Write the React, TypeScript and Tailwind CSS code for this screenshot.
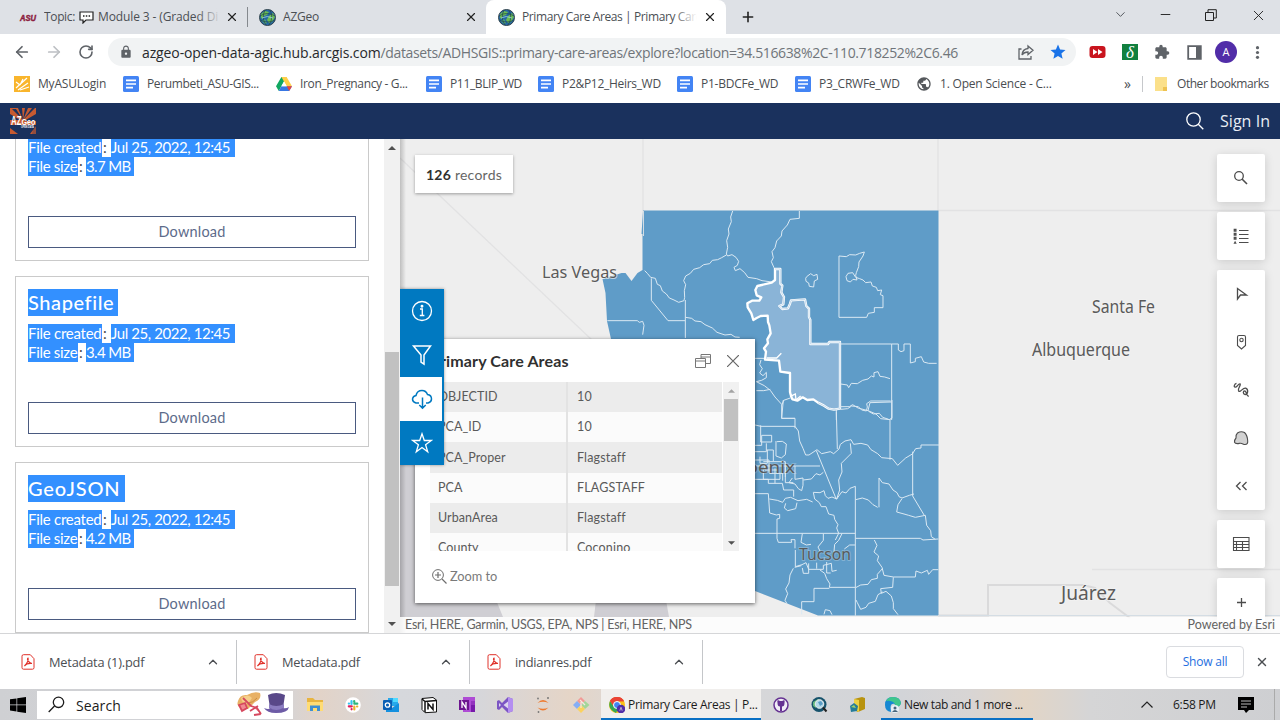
import React from "react";
import { ArrowLeft, ArrowRight, RotateCw, X, Plus, ChevronDown, ChevronUp, Minus } from "lucide-react";
import { MdLock, MdExtension, MdStar, MdPublic } from "react-icons/md";

const UI = "font-['Open_Sans','Noto_Sans',sans-serif]";
const AV = "font-['Lato','Open_Sans',sans-serif]";

function Globe() {
  return (
    <svg className="size-[17px] shrink-0" viewBox="0 0 17 17">
      <circle cx="8.500" cy="8.500" r="8" fill="#2468a3" stroke="#33444c" />
      <path d="M2 5l4-3 4 1-2 3-3 1-1 3-2-1zM10 7l4-3 2 4-3 5-3 1-2-3z" fill="#6abb52" />
      <path d="M6 10l2 4-2 1-3-3z" fill="#55a975" />
      <path d="M1 7q7-5 15 0M1 11q8 4 15 0M6 1q-4 8 1 15M11 1q4 8-1 15" stroke="#1f4450" strokeWidth=".7" fill="none" />
      <path d="M3 9q5-3 11 0" stroke="#9bd0e8" strokeWidth=".8" fill="none" />
    </svg>
  );
}

function DocIcon() {
  return (
    <svg className="size-4 shrink-0" viewBox="0 0 16 16">
      <rect width="16" height="16" rx="1.500" fill="#4384f4" />
      <path d="M3 4.300h10M3 8h10M3 11.700h7" stroke="#fff" strokeWidth="1.700" />
    </svg>
  );
}

function TabStrip() {
  return (
    <div className="flex h-[34px] shrink-0 bg-[#dee1e6] text-[12px] text-[#4b4f54]">
      <div className="flex w-[248px] items-center pl-5">
        <svg className="mr-[8px] h-[8px] w-4 shrink-0 overflow-visible" viewBox="0 0 16 8">
          <text x="0" y="7.500" textLength="16" lengthAdjust="spacingAndGlyphs" fontFamily="Liberation Sans, sans-serif" fontSize="9.500" fontWeight="700" fontStyle="italic" fill="#8c1d40" stroke="#8c1d40" strokeWidth=".5">ASU</text>
        </svg>
        <span className="relative flex w-[177px] items-center overflow-hidden whitespace-nowrap">
          <span className="tracking-[-0.35px]">Topic:</span>
          <svg className="mx-[4px] h-[13px] w-[15px] shrink-0" viewBox="0 0 15 13">
            <path d="M1 1h13v8H7l-3 3V9H1z" fill="#fff" stroke="#222" strokeWidth="1.200" />
            <path d="M4 5h1.500M6.800 5h1.500M9.600 5h1.500" stroke="#222" strokeWidth="1.500" />
          </svg>
          <span className="tracking-[-0.12px]">Module 3 - (Graded Di</span>
          <span className="absolute right-0 h-5 w-6 bg-gradient-to-r from-transparent to-[#dee1e6]" />
        </span>
        <X className="ml-[4px] size-[14px] text-[#222]" strokeWidth={2} />
        <span className="ml-auto h-5 w-px bg-[#85898e]" />
      </div>
      <div className="flex w-[238px] items-center pl-[11px]">
        <Globe />
        <span className="ml-[7px] w-[181px] text-[12px] tracking-[-0.2px]">AZGeo</span>
        <X className="size-[14px] shrink-0 text-[#222]" strokeWidth={2} />
      </div>
      <div className="flex w-[240px] items-center rounded-t-[8px] bg-white pl-[12px]">
        <Globe />
        <span className="relative ml-[7px] w-[175px] overflow-hidden whitespace-nowrap tracking-[-0.4px]">
          Primary Care Areas | Primary Care
          <span className="absolute right-0 h-5 w-6 bg-gradient-to-r from-transparent to-white" />
        </span>
        <X className="ml-[6px] size-[14px] shrink-0 text-[#222]" strokeWidth={2} />
      </div>
      <Plus className="ml-[14px] mt-[9px] size-4 text-[#222]" strokeWidth={2.4} />
      <div className="mt-[7px] flex flex-1 justify-end">
        <ChevronDown className="mr-[30px] size-[15px]" strokeWidth={1.5} />
        <Minus className="mr-[32px] size-[15px] text-[#222]" strokeWidth={1.5} />
        <svg className="mr-[33px] mt-[2px] size-[12px]" viewBox="0 0 12 12" fill="none" stroke="#222">
          <path d="M.5 3.500h8v8h-8zM3 3V.7h8.300V9H9" />
        </svg>
        <X className="mr-[13px] size-[17px] text-[#222]" strokeWidth={1.3} />
      </div>
    </div>
  );
}

function AddressBar() {
  return (
    <div className="flex h-[36px] shrink-0 items-center bg-white text-[#5f6368]">
      <ArrowLeft className="ml-[13px] size-[18px]" strokeWidth={2.3} />
      <ArrowRight className="ml-[14px] size-[18px] text-[#bcbfc3]" strokeWidth={2.3} />
      <RotateCw className="ml-[15px] size-[16px]" strokeWidth={2.4} />
      <div className="ml-[14px] flex h-7 w-[968px] items-center rounded-full bg-[#f1f3f4] pl-[11px]">
        <MdLock className="size-[14px]" />
        <span className="ml-[9px] w-[876px] whitespace-nowrap text-[14px] tracking-[-0.37px] text-[#70757a]">
          <span className="tracking-[-0.12px] text-[#27292c]">azgeo-open-data-agic.hub.arcgis.com</span>/datasets/ADHSGIS::primary-care-areas/explore?location=34.516638%2C-110.718252%2C6.46
        </span>
        <svg className="size-4" viewBox="0 0 16 16" fill="none" stroke="#5f6368" strokeWidth="1.300">
          <path d="M3.500 5H1v10h12v-3M10 2l5 4.300-5 4.200V8Q6 8 4 11q.5-6 6-6.500z" />
        </svg>
        <MdStar className="ml-[15px] size-[18px] text-[#1a73e8]" />
      </div>
      <svg className="ml-[13px] h-[14px] w-[17px]" viewBox="0 0 17 14">
        <rect x=".5" y="1" width="16" height="12" rx="3" fill="#c9151e" />
        <path d="M4 4l4.500 3L4 10zM9 4l4.500 3L9 10z" fill="#fff" />
      </svg>
      <span className="ml-[16px] flex size-4 items-center justify-center bg-[#11803f] font-['Liberation_Serif',serif] text-[17px] italic leading-none text-white">δ</span>
      <MdExtension className="ml-[16px] size-4" />
      <svg className="ml-[17px] size-[15px]" viewBox="0 0 15 15">
        <path d="M1.200 1.200h12.600v12.600H1.200z" fill="#fff" stroke="#5f6368" strokeWidth="1.800" />
        <path d="M9 1h5v13H9z" fill="#5f6368" />
      </svg>
      <span className="ml-[13px] flex size-[22px] items-center justify-center rounded-full bg-[#512da8] text-[11px] text-white">A</span>
      <svg className="ml-[18px] h-[13px] w-[5px]" viewBox="0 0 5 13" fill="#5f6368">
        <circle cx="2.500" cy="1.700" r="1.600" /><circle cx="2.500" cy="6.500" r="1.600" /><circle cx="2.500" cy="11.300" r="1.600" />
      </svg>
    </div>
  );
}

function Bookmark({ w, icon, children }: { w: string; icon: React.ReactNode; children: React.ReactNode }) {
  return <div className={`flex shrink-0 items-center gap-[8px] whitespace-nowrap ${w}`}>{icon}<span>{children}</span></div>;
}

function Bookmarks() {
  return (
    <div className="flex h-[33px] shrink-0 items-center bg-white pb-[5px] pl-[14px] text-[12px] tracking-[-0.2px] text-[#4a4d51]">
      <Bookmark w="w-[109px]" icon={
        <svg className="size-4" viewBox="0 0 16 16"><rect width="16" height="16" fill="#f9b52c" /><path d="M2 6l4 3M2 12L13 2M4 14L14 7M6 14l9-3M6 9l3-6" stroke="#fff" strokeWidth="1.200" fill="none" /></svg>
      }>MyASULogin</Bookmark>
      <Bookmark w="w-[153px] tracking-[-0.35px]" icon={<DocIcon />}>Perumbeti_ASU-GIS...</Bookmark>
      <Bookmark w="w-[150px] tracking-[-0.35px]" icon={
        <svg className="h-[14px] w-4" viewBox="0 0 16 14">
          <path d="M5.400 0h5.200L8 4.600 2.800 14 0 9.300z" fill="#11a861" />
          <path d="M5.400 0h5.200L16 9.300h-5.300z" fill="#ffcf48" />
          <path d="M2.800 14L5.300 9.300H16L13.200 14z" fill="#3777e3" />
          <path d="M10.700 9.300H16L13.200 14z" fill="#e8453c" />
          <path d="M8 4.600l2.700 4.700H5.300z" fill="#fff" />
        </svg>
      }>Iron_Pregnancy - G...</Bookmark>
      <Bookmark w="w-[112px] tracking-[-0.35px]" icon={<DocIcon />}>P11_BLIP_WD</Bookmark>
      <Bookmark w="w-[139px] tracking-[-0.3px]" icon={<DocIcon />}>P2&amp;P12_Heirs_WD</Bookmark>
      <Bookmark w="w-[118px] tracking-[-0.25px]" icon={<DocIcon />}>P1-BDCFe_WD</Bookmark>
      <Bookmark w="w-[121px] tracking-[-0.25px]" icon={<DocIcon />}>P3_CRWFe_WD</Bookmark>
      <Bookmark w="w-[208px]" icon={<MdPublic className="size-4 text-[#55585c]" />}>1. Open Science - C...</Bookmark>
      <span className="mb-[2px] w-[18px] text-[14px]">»</span>
      <span className="h-4 w-px bg-[#c6c8cb]" />
      <svg className="ml-[12px] mr-[10px] h-[14px] w-[12px]" viewBox="0 0 12 14"><path d="M0 0h12v14H0z" fill="#fbe08a" /><path d="M8 10h4v4H8z" fill="#eec251" /></svg>
      <span className="whitespace-nowrap tracking-[-0.45px]">Other bookmarks</span>
    </div>
  );
}

function SiteHeader() {
  return (
    <div className="flex h-[36px] shrink-0 items-center bg-[#1a315d] pl-[10px] text-white">
      <svg className="size-[26px]" viewBox="0 0 26 26">
        <rect width="26" height="26" fill="#c65a31" />
        <path d="M13 12L2 1h4zM13 12L8 0h4zM13 12l2-12h3zM13 12l9-12h3zM0 6l10 6H0zM26 6v7H14z" fill="#1a315d" />
        <path d="M0 17h26v1l-6 8h-12L0 20z" fill="#1a315d" />
        <path d="M24 18h2v8h-4z" fill="#1a315d" opacity=".3" />
        <text x="1" y="17" textLength="10.500" lengthAdjust="spacingAndGlyphs" fontFamily="Liberation Sans" fontWeight="700" fontSize="13.500" fill="#fff">AZ</text>
        <text x="11.500" y="16.500" textLength="14" lengthAdjust="spacingAndGlyphs" fontFamily="Liberation Sans" fontWeight="700" fontSize="8.500" fill="#fff">Geo</text>
        <text x="11" y="20" textLength="13" lengthAdjust="spacingAndGlyphs" fontFamily="Liberation Sans" fontWeight="700" fontSize="3" fill="#fff">OPEN DATA</text>
      </svg>
      <svg className="ml-auto size-[18px]" viewBox="0 0 18 18" fill="none" stroke="#fff" strokeWidth="1.300"><circle cx="7.500" cy="7.500" r="6.700" /><path d="M12.300 12.300l5 5" /></svg>
      <span className="ml-[16px] mr-[10px] text-[16px] tracking-[0.03px] text-[#e9edf5]">Sign In</span>
    </div>
  );
}

function Hl({ w, children }: { w: string; children: React.ReactNode }) {
  return <span className={`inline-block h-full shrink-0 whitespace-pre bg-[#3390ff] text-white ${w}`}>{children}</span>;
}

function FileCard({ title, size }: { title: string; size: string }) {
  return (
    <div className="flex h-[171px] shrink-0 flex-col border border-[#cacaca] px-3 pt-3">
      <div className="flex h-[27px] text-[20px] font-medium leading-[26px]">
        {title === "GeoJSON"
          ? <Hl w="w-[97px] tracking-[0.85px]">{title}</Hl>
          : <Hl w="w-[90px] tracking-[0.6px]">{title}</Hl>}
      </div>
      <div className="mt-[8px] flex h-[19px] text-[15px] leading-[19px] text-[#4c4c4c]">
        <Hl w="w-[74px] tracking-[-0.26px]">File created</Hl><span className="w-[9px] pl-px">:</span><Hl w="w-[124px] tracking-[-0.42px]">Jul 25, 2022, 12:45</Hl>
      </div>
      <div className="flex h-[19px] text-[15px] leading-[19px] text-[#4c4c4c]">
        <Hl w="w-[50px] tracking-[-0.3px]">File size</Hl><span className="w-[8px] pl-px">:</span><Hl w="w-[48px] tracking-[-0.65px]">{size}</Hl>
      </div>
      <button className="mb-3 mt-auto h-8 border border-[#4a5a80] text-[14.500px] tracking-[0.2px] text-[#5d6b8a]">Download</button>
    </div>
  );
}

function SidePanel() {
  return (
    <div className={`flex w-[400px] shrink-0 overflow-hidden bg-white ${AV}`}>
      <div className="-mt-[49px] flex w-[384px] flex-col gap-[15px] pl-[15px] pr-[15px]">
        <FileCard title="GeoJSON" size="3.7 MB" />
        <FileCard title="Shapefile" size="3.4 MB" />
        <FileCard title="GeoJSON" size="4.2 MB" />
      </div>
      <div className="flex w-4 flex-col items-center bg-[#f1f1f1]">
        <svg className="mt-[7px] h-1 w-2" viewBox="0 0 8 4"><path d="M0 4l4-4 4 4z" fill="#505050" /></svg>
        <div className="mt-[202px] h-[234px] w-[14px] bg-[#c1c1c1]" />
        <svg className="mt-[36px] h-1 w-2" viewBox="0 0 8 4"><path d="M0 0l4 4 4-4z" fill="#505050" /></svg>
      </div>
    </div>
  );
}

function MapCanvas() {
  return (
    <svg className="h-[494px] w-[880px]" viewBox="400 139 880 494">
      <path d="M400 139h880v494H400z" fill="#eeeeee" />
      <path d="M400 460h15l75 125 13 32H400zM596 600h70l3 17h-75z" fill="#cfced3" />
      <path d="M400 158L592 340M643 139v72M938 139v72M938 210.500h342M1092 569.500h188" stroke="#e2e2e3" strokeWidth="1.300" fill="none" />
      <path d="M938 615.500h50V585h95l12 3 15 15 20 15" stroke="#dadadb" strokeWidth="2" fill="none" />
      <path d="M643 210.500H938.500V615.500H818L755 591l-130-60-14-192-4-18-1.500-28-3-14 10-3 9-3h4l6 8 6-8 5-3V234h-1z" fill="#5f9cc8" />
      <g transform="translate(590 200) scale(.33333)" fill="none" stroke="#dbe9f3" strokeWidth="3">
        <path d="M428 33l-6 18 2 14-9 22 2 15-7 20 3 20-4 20 4 6 13-4 12 8 8 12-4 12-10 6 4 10 14-6 14 12 10 14 26 4 16 6 30 4M628 33v22l-28 3-8 17-16 18-2 15-14 15-5 20-9 12 4 18-6 12 8 18 6 14" />
        <path d="M409 165l-14 8-12 6-16 2-8 10-18 3-12 9-18 5-10 12-14 8-6 14 6 12-4 18 1 20-2 10-16 5-14-7-14-6-9-12-12-9-6-16-9-4-6-18-14-3-10-12-8-8" />
        <path d="M184 235v66l50 61h51M286 300v114M52 362h90l6 5 10-3 4 12-4 28M287 352l18 3 10 8 18 2 12 9 22 10 14 13 24 8 18-2 12 8 14 1" />
        <path d="M747 168l22 2 10-6 18 1 12-5 14-4-4 12-12 18-1 14-7 18-2 8 4 14-12-2-8 8-10-4-3-12 6-10 14-2 9 14 12 4 10 4 8 8 16-2 4 12 12 4 4 10 12-2-4 14 8 3v36h-26v14l-18 3-5 12H747z" />
        <path d="M650 230l12-9 9 6 10-4 2 15-10 5-2 18-13-2-2-10-8-5-1-9z" />
        <path d="M752 432h153v228M905 432h20v18l8 5 9-3v-20h19v57l15-4v-10l18-5 7 16 15 4h24M752 552l20 3 4 8 8-13 18 1 16-10 16-4 10-9 8 3v-13l12-3 6 14 14 2 16 5M753 628l20-2 12-8 20 2 10 10 14 3 3-12-2-10 12-8h60M836 634l14 8 18-2 10 12 18 6" />
        <path d="M495 475h30M513 480l-4 14 8 12-8 13 10 8 10-10v16l-14 8-16 4M499 545l24 12 18 14 14 20 20 22v42h40M499 572h22l20-4M576 614l5-13 20-7M739 630v30" />
        <path d="M555 207h16v44l6 6-3 20 8 14-2 22-12 5 9 9 17-2 6-14 3-10 42-3 4 20 8 8v25l4 8V432H714l4-6H750V626l-18 3-16-3-14-9-18-9-14-10-18 2-14-8-16 10-14-4-2-2-4-12-2-8V519L571 515 567 482 525 479 528 455 522 445 534 430 532 418 542 400 538 376 534 366 533 347 512 348 500 354 490 360 484 340 473 322 472 310 486 302 508 302 514 292 500 286 496 270 502 258 545 248 555 240z" fill="#8ab4d7" stroke="#fff" strokeWidth="7" strokeLinejoin="round" />
        <path d="M555 207h16v44l6 6-3 20 8 14-2 22-12 5 9 9 17-2 6-14 3-10 42-3 4 20 8 8v25l4 8V432H714l4-6H750V626l-18 3-16-3-14-9-18-9" stroke="#a9c9e2" strokeWidth="2" />
        <path d="M530 474l30 0 14-14M600 590l16-8 2 18 14-12" strokeWidth="4" stroke="#fff" />
      </g>
      <g transform="translate(740 400) scale(.33333)" fill="none" stroke="#dbe9f3" strokeWidth="3">
        <path d="M130 0l-5 55h40v30M45 75l18 4h102l10 14 4 30 10 22 8 20 10 0 24-16 14 12 26-6 10 6 16-14 4-14 14-10 18-4 8 14 22-3 20 5 10 14 20 12 12 12 32 3 16 20 24-22 20-12 10-16 16-2v-9h55M289 35l3 112M331 130l3 30-30 30 2 26-10 24 3 30-9 27M229 152l60 146" />
        <path d="M456 0v55l-6 2v122M300 20l28 0 10-6 16 10 30 8 6-24 64-2M384 32l24 10 14 14 28 3M518 155v133l36 60M417 322v-88l10 14 20 4 12 18 12 8 6 12 9 4 22-8 14-4M347 299l20-5 18 6 14 14 14 8M486 296l-12 18-4 22 22 6 14 4 20 6 30-6 4 30 12 16 2 18 12 8M347 415h194l8 5 46-3" />
        <path d="M346 259v388M346 259l-16 6-12 14-12-4-16 22-14-6-12 4-8-8-4-15-12 6-20-1 4 20 14 11 6 12 14 0 8 22 16 4 2 12 10 16-4 10 6 16-10 20M45 400h301M45 281h40l4 58 20 6 10-2v12l-8 2v58l4 12 40 0-2-8h12v26M88 297l24 4 16 6 8-12 16-3 22 10 26-4 18 8M137 310l-4 14 10 8 24-6 4-18" />
        <path d="M187 401l-4 26 16 8 14-2M166 450v50l20-6 12-6 8 20h44v-12l24-6 2 24 14-3M250 401v20l-16 20 6 12M306 401l-10 20-12 12-2 22M206 490v30h-16l-3-16M240 510l14 10 6 16 10 16-2 10h77M222 565v40h-37v38M222 565h46M160 505l-10 20-3 24-10 18 6 14-8 20 6 10M184 497l-20 5M230 488v18M260 486v33h12M345 435l-16 0-16 12" />
        <path d="M403 420l8 16-9 20 14 12-4 14 14 20 6 24 28 5h66l2-18 16 6 18-8 4 12 12-14h17M428 505l-16 18 0 12-18 4-10 14-22 2-15 8M460 532l-2 30-36 4 2 14 14-6 16 14 6 20v18l14 18M428 576l-14 8-8 20-20 6-8 12-16 6-10-20-4-8M252 643l4-14 14 3 6 12" />
        <path d="M45 136h20v-30h30v20H62v-50M45 155h34v-25M60 170v20h22v-40M80 150h20v35H70M108 123v45l16 6 12-10 3-32-12-8-16 1M100 185h36v46M45 198h195M70 208v30h50v-18M45 238h40v12h42l4 20h30v20M88 220h40v22M165 198v40l24-4v22l-4 16-10-6-10-14-18-4 10-14M190 240l24-3 14-16 12 4 10-8M136 198v50h24M45 180h42v38M75 190v20h40M105 205v45" />
      </g>
      <path d="M643.500 211V236M938 615.500h342" stroke="#d4dde4" strokeWidth="1" />
      <g fontFamily="Noto Sans, sans-serif" fill="#5a5a5a" stroke="#f4f4f4" strokeWidth="2" strokeOpacity=".65" paintOrder="stroke">
        <text x="542" y="278" fontSize="17" textLength="75" lengthAdjust="spacingAndGlyphs">Las Vegas</text>
        <text x="1092" y="313" fontSize="17.500" textLength="63" lengthAdjust="spacingAndGlyphs">Santa Fe</text>
        <text x="1032" y="356" fontSize="17.500" textLength="98" lengthAdjust="spacingAndGlyphs">Albuquerque</text>
        <text x="1061" y="600" fontSize="19" textLength="55" lengthAdjust="spacingAndGlyphs">Juárez</text>
        <text x="735" y="473" fontSize="17" textLength="60" lengthAdjust="spacingAndGlyphs" strokeOpacity=".25">hoenix</text>
        <text x="799" y="560" fontSize="17" textLength="52" lengthAdjust="spacingAndGlyphs" strokeOpacity=".25">Tucson</text>
      </g>
    </svg>
  );
}

const attributes: [string, string][] = [
  ["OBJECTID", "10"], ["PCA_ID", "10"], ["PCA_Proper", "Flagstaff"],
  ["PCA", "FLAGSTAFF"], ["UrbanArea", "Flagstaff"], ["County", "Coconino"],
];

function Popup() {
  return (
    <div className="absolute left-[15px] top-[200px] flex h-[264px] w-[340px] flex-col bg-white px-[15px] text-[#5a5a5a] shadow-[0_1px_4px_rgba(0,0,0,0.6)]">
      <div className="flex h-[43px] shrink-0 items-center text-[#303030]">
        <span className="whitespace-nowrap text-[16px] font-bold tracking-[0.14px]">Primary Care Areas</span>
        <svg className="ml-auto size-4" viewBox="0 0 16 16" fill="none" stroke="#777"><path d="M.5 5.500h10v9H.5zM.5 8h10M6 5V1.500h9.500v9H11M6 4h9.500" /></svg>
        <svg className="ml-[16px] mr-px size-[12px]" viewBox="0 0 12 12" stroke="#666" strokeWidth="1.200"><path d="M0 0l12 12M12 0L0 12" /></svg>
      </div>
      <div className="flex h-[169px] shrink-0 overflow-hidden">
        <div className="w-[292px]">
          {attributes.map(([k, v], i) => (
            <div key={k} className={`flex h-[30.200px] items-center pt-px text-[12.500px] tracking-[0.15px] ${i % 2 ? "bg-[#fbfbfb]" : "bg-[#ececec]"}`}>
              <span className="-mt-px flex h-[30.200px] w-[138px] items-center border-r-2 border-[#e3e3e3] pl-2 pt-px tracking-[0.06px]">{k}</span>
              <span className="pl-[9px]">{v}</span>
            </div>
          ))}
        </div>
        <div className="ml-px flex w-4 flex-col items-center bg-[#f1f1f1]">
          <svg className="mt-[7px] h-1 w-[7px]" viewBox="0 0 8 4"><path d="M0 4l4-4 4 4z" fill="#a3a3a3" /></svg>
          <div className="mt-[6px] h-[42px] w-[14px] bg-[#c1c1c1]" />
          <svg className="mt-[100px] h-1 w-[7px]" viewBox="0 0 8 4"><path d="M0 0l4 4 4-4z" fill="#505050" /></svg>
        </div>
      </div>
      <div className="flex h-[51px] items-center text-[12.800px] tracking-[-0.05px] text-[#7a7a7a]">
        <svg className="ml-[2px] mr-[3px] size-[15px]" viewBox="0 0 15 15" fill="none" stroke="#6e6e6e"><circle cx="6" cy="6" r="5.400" /><path d="M3 6h6M6 3v6M10 10l4.500 4.500" strokeWidth="1.200" /></svg>
        Zoom to
      </div>
    </div>
  );
}

function ActionRail() {
  const s = "size-[22px]";
  return (
    <div className="absolute left-0 top-[150px] flex w-[44px] flex-col bg-[#0079c1] shadow-[0_0_3px_rgba(0,0,0,0.4)]">
      <div className="flex h-[44px] items-center justify-center">
        <svg className={s} viewBox="0 0 22 22" fill="none" stroke="#fff" strokeWidth="1.300"><circle cx="11" cy="11" r="9.500" /><path d="M9 9h2.300v6.500M8.800 15.500h4.600" /><circle cx="11" cy="6.200" r=".8" fill="#fff" /></svg>
      </div>
      <div className="flex h-[44px] items-center justify-center">
        <svg className={s} viewBox="0 0 22 22" fill="none" stroke="#fff" strokeWidth="1.500"><path d="M2.500 2h17L13 11v9l-3-2v-7z" /></svg>
      </div>
      <div className="flex h-[44px] w-[42px] items-center justify-center bg-white pl-[2px]">
        <svg className={s} viewBox="0 0 22 22" fill="none" stroke="#0079c1" strokeWidth="1.500"><path d="M8 15H5Q1.500 14 1.500 11 2 8 5 7.500 6 2.500 11 2.500q4 0 5.500 4 4 .5 4 4.500 0 3-3.500 4h-2M11.500 9.500V20M8.300 17l3.200 3.200 3.200-3.200" /></svg>
      </div>
      <div className="flex h-[44px] items-center justify-center">
        <svg className={s} viewBox="0 0 22 22" fill="none" stroke="#fff" strokeWidth="1.300"><path d="M11 1.800l2.300 6.700h7l-5.700 4.200 2.100 7L11 15.500l-5.700 4.200 2.100-7L1.700 8.500h7z" /></svg>
      </div>
    </div>
  );
}

function ToolCell({ children }: { children: React.ReactNode }) {
  return (
    <div className="flex size-12 shrink-0 items-center justify-center">
      <svg className="size-4 overflow-visible" viewBox="0 0 16 16" fill="none" stroke="#4c4c4c" strokeWidth="1.100">{children}</svg>
    </div>
  );
}

function MapTools() {
  const box = "flex flex-col rounded-[2px] bg-white shadow-[0_2px_10px_rgba(0,0,0,0.15)]";
  return (
    <div className="absolute right-[15px] top-[15px] flex h-[463px] flex-col gap-[10px]">
      <div className={box}><ToolCell><circle cx="6" cy="6" r="4.300" strokeWidth="1.300" /><path d="M9 9l5 5" strokeWidth="1.600" /></ToolCell></div>
      <div className={box}>
        <ToolCell><path d="M6 2.500h9.500M6 6.500h9.500M6 10.500h9.500M6 14.500h9.500" /><path d="M1.300 1.500h1.600v1.600H1.300zM1.300 5.500h1.600v1.600H1.300zM1.300 9.500h1.600v1.600H1.300z" strokeWidth="1.300" /><path d="M.5 15.800l1.600-3 1.600 3z" fill="#4c4c4c" stroke="none" /></ToolCell>
      </div>
      <div className={box}>
        <ToolCell><path d="M4.500 2.500v10.500l3-4h6z" strokeWidth="1.300" /></ToolCell>
        <ToolCell><path d="M4.500 3q0-1.500 1.500-1.500h5q1.500 0 1.500 1.500v8.500l-4 3.500-4-3.500z" /><circle cx="8.500" cy="6" r="1.700" /></ToolCell>
        <ToolCell><path d="M3.500 1.300C1.500 1.800.3 5 2.200 5.200S5 1.600 7 1.800C8.500 2.800 4.500 6.500 5.500 8.600 7 11.500 9.300 5.700 12.500 6.200c3.300 1 2.500 6.300-.3 6.300C9.500 12 10 8.800 11.800 8.800c2 .4 1 5 4 5.500" strokeWidth="1.300" /></ToolCell>
        <ToolCell><path d="M4.500 3Q8 .8 11.500 2.500q3 3 3.200 8.500.3 3.500-2.700 3.500c-2 0-2.500-1.500-5-1.200-2 .3-4.500 1-5.500-1Q1.500 9.500 3 8 2.800 4.500 4.500 3z" fill="#d2d2d2" /></ToolCell>
        <ToolCell><path d="M7.500 4l-4 4 4 4M13.500 4l-4 4 4 4" strokeWidth="1.300" /></ToolCell>
      </div>
      <div className={box}>
        <ToolCell><path d="M.5 1.500h15.500v13H.5zM.5 5.500H16M.5 8.500H16M.5 11.500H16M3.500 5.500v9M9.500 5.500v9" /></ToolCell>
      </div>
      <div className={box}><ToolCell><path d="M8.500 4v9M4 8.500h9" strokeWidth="1.300" /></ToolCell></div>
    </div>
  );
}

function MapView() {
  return (
    <div className={`relative flex w-[880px] shrink-0 overflow-hidden ${AV}`}>
      <MapCanvas />
      <div className="pointer-events-none absolute left-0 top-0 h-full w-[6px] bg-gradient-to-r from-black/20 to-transparent" />
      <div className="absolute left-[15px] top-[16px] flex h-[38px] w-[98px] items-center justify-center whitespace-pre bg-white text-[14px] tracking-[0.25px] text-[#666] shadow-[0_1px_3px_rgba(0,0,0,0.35)]">
        <b className="text-[#303030]">126</b> records
      </div>
      <Popup />
      <ActionRail />
      <MapTools />
      <div className="absolute bottom-0 left-0 flex h-[16px] w-full items-center justify-between bg-white/80 pl-[5px] pr-[5px] pt-px text-[12.500px] tracking-[-0.21px] text-[#636363]">
        <span>Esri, HERE, Garmin, USGS, EPA, NPS | Esri, HERE, NPS</span>
        <span className="tracking-[-0.03px]">Powered by Esri</span>
      </div>
    </div>
  );
}

function DownloadItem({ name, w }: { name: string; w: string }) {
  return (
    <div className={`flex h-[44px] items-center border-r border-[#c4c6c9] ${w}`}>
      <svg className="h-4 w-[14px]" viewBox="0 0 14 16" fill="none" stroke="#e0322b"><path d="M2.500.7h6.800l3.700 4v9q0 1.500-1.500 1.500h-9Q1 15.200 1 13.700V2.200Q1 .7 2.500.7z" /><path d="M7 4q1 3-3.500 8 2-3 7.500-2.500Q8 9 6.500 5.500 6.500 4 7 4z" strokeWidth="1.200" /></svg>
      <span className="ml-[14px] flex-1 whitespace-nowrap pt-[2px]">{name}</span>
      <ChevronUp className="mr-[16px] size-[14px]" strokeWidth={2.2} />
    </div>
  );
}

function DownloadBar() {
  return (
    <div className="flex h-[56px] shrink-0 items-center border-t border-[#d5d6d8] bg-white text-[12.800px] tracking-[-0.2px] text-[#4b4e52]">
      <DownloadItem name="Metadata (1).pdf" w="w-[237px] pl-[21px]" />
      <DownloadItem name="Metadata.pdf" w="w-[233px] pl-[17px]" />
      <DownloadItem name="indianres.pdf" w="w-[233px] pl-[17px]" />
      <button className="ml-auto h-8 w-[78px] rounded-[4px] border border-[#dadce0] text-[12px] font-medium text-[#1f6fe0]">Show all</button>
      <X className="ml-[11px] mr-[11px] size-[14px]" strokeWidth={2.4} />
    </div>
  );
}

function Cell({ children }: { children: React.ReactNode }) {
  return <div className="flex w-[38px] shrink-0 items-center justify-center"><svg className="size-4 overflow-visible" viewBox="0 0 16 16">{children}</svg></div>;
}

function Taskbar() {
  return (
    <div className="flex h-[31px] shrink-0 items-center bg-[linear-gradient(90deg,#cfd0d3_0,#d3d4d8_280px,#e2d3c8_320px,#d6d8dc_400px,#d6d6da_480px,#e5d5c7_570px,#dad9da_640px,#d2d4d8_900px,#d8d5d4_970px,#e2d5c6_1025px,#d5d5d6_1090px,#cecfd2_1280px)] text-[13px] text-[#1b1b1b]">
      <svg className="ml-[10px] size-4" viewBox="0 0 16 16" fill="#000"><path d="M0 2.300l6.500-.9v6.100H0zM7.200 1.300L16 0v7.500H7.200zM0 8.200h6.500v6.200L0 13.500zM7.200 8.200H16V16l-8.800-1.300z" /></svg>
      <div className="ml-[11px] flex h-[28px] w-[256px] items-center bg-white pl-[11px] text-[14px]">
        <svg className="size-[17px]" viewBox="0 0 17 17" fill="none" stroke="#1b1b1b" strokeWidth="1.300"><circle cx="10.500" cy="6.300" r="5.200" /><path d="M6.500 10L.7 16" /></svg>
        <span className="ml-[11px] flex-1 pt-px tracking-[0.1px]">Search</span>
        <svg className="h-[25px] w-[54px]" viewBox="0 0 54 25">
          <path d="M1 9Q3 2 10 3q7-4 13-2 2 6-5 9l-7 7Q-2 17 1 9z" fill="#e8b166" />
          <path d="M4 6q7-5 11 0l-4 6Q5 12 4 6z" fill="#f5cf8b" />
          <path d="M11 11q5 0 9-5" stroke="#c98c45" fill="none" />
          <path d="M6 6l8 8 6 2 4 6M2 13l6-2 2 5-5 3zM13 19l8-5M17 23l7-1" fill="#f08a92" stroke="#d6485f" strokeWidth="1.800" />
          <path d="M31 3q8-4 17 0l-2 13q-6 4-13 0z" fill="#594889" />
          <path d="M32 12q7 4 15 0v4q-7 5-15 0z" fill="#8b7cc0" />
          <path d="M27 16q5 2 6 0 6 4 13 0 3 1 6-1-1 6-13 6-9 0-12-5z" fill="#6d5ba6" />
        </svg>
        <span className="w-[2px]" />
      </div>
      <div className="ml-[3px] flex w-[305px]">
        <Cell><path d="M0 1h6l2 2h8v11H0z" fill="#e8b43f" /><path d="M0 5h16v9H0z" fill="#ffdc74" /><path d="M3 14V8.500h10V14h-3v-3H6v3z" fill="#3f8fd1" /></Cell>
        <Cell><circle cx="8" cy="8" r="7.800" fill="#fff" /><g strokeWidth="2.200" strokeLinecap="round"><path d="M6.500 4v3M3.800 6.600H4" stroke="#36c5f0" /><path d="M9.300 6.700h3M9.200 4v1" stroke="#2eb67d" /><path d="M9.300 9.500v3M12 9.500h.3" stroke="#ecb22e" /><path d="M3.800 9.300h3M6.600 12v.3" stroke="#e01e5a" /></g></Cell>
        <Cell><path d="M5 1h10v8H5z" fill="#28a8ea" /><path d="M10 1h5v4h-5z" fill="#50d9ff" /><path d="M3 7l6 4 7-5v9H3z" fill="#1490df" /><rect y="3" width="9" height="10" rx="1" fill="#0a5eb4" /><circle cx="4.500" cy="8" r="2.200" fill="none" stroke="#fff" strokeWidth="1.300" /></Cell>
        <Cell><path d="M1 1.500l11-1 3.500 2.500v12l-11.500.7L1 12.500z" fill="#fff" stroke="#111" /><path d="M1 2l3 2.500V15M4 4.500l11.500-1" fill="none" stroke="#111" strokeWidth="1.500" /><path d="M7 12.500v-6l5 6v-6" fill="none" stroke="#111" strokeWidth="1.500" /></Cell>
        <Cell><path d="M4 0h12v15H4z" fill="#ae4bd5" /><path d="M12 4h4v4h-4z" fill="#9332bf" /><path d="M12 8h4v7h-4z" fill="#7719aa" /><rect y="3" width="10" height="10" fill="#6d168f" /><path d="M3 11V5l4 6V5" stroke="#fff" strokeWidth="1.300" fill="none" /></Cell>
        <Cell><path d="M11 0l5 2v12l-5 2-6-6-3 3-2-1V4l2-1 3 3z" fill="#7c55c4" /><path d="M11 4.500v7L6.500 8zM2 6v4l2-2z" fill="#ddd5ee" /><path d="M11 0l5 2v12l-5 2z" fill="#b48ef0" /></Cell>
        <Cell><path d="M2.500 6Q8 0 13.500 6 8 3.500 2.500 6zM2.500 10.500Q8 16.500 13.500 10.500 8 13 2.500 10.500z" fill="#ee7b30" /><circle cx="3" cy="1.500" r=".9" fill="#777" /><circle cx="13" cy="1" r="1" fill="#777" /><circle cx="3.500" cy="15" r=".9" fill="#777" /></Cell>
        <Cell><path d="M8 0l4 4-4 4-4-4z" fill="#f29a96" /><path d="M12 4l4.500 4-4.500 4-4-4z" fill="#a3d699" /><path d="M4 4l4 4-4 4-4-4z" fill="#86aef5" /><path d="M8 8l4 4-4 4-4-4z" fill="#fbd25e" /><path d="M7 3l5 5M8 5v6" stroke="#f3e9e2" strokeWidth="1.200" /></Cell>
      </div>
      <div className="flex h-full w-[160px] items-center whitespace-nowrap border-b-2 border-[#0a70c4] bg-[#f1efed] pl-[8px] pt-[3px] text-[12px] tracking-[-0.5px]">
        <svg className="mb-px mr-[3px] size-4 shrink-0" viewBox="0 0 16 16"><circle cx="8" cy="8" r="8" fill="#fbc116" /><path d="M1 4Q3 0 8 0q5 0 7 4.300H8z" fill="#ea4335" /><path d="M1 4q-3 8 6 12l2.500-5L5 9.500z" fill="#34a853" /><path d="M1 4l4 6 3-5.700h7Q13 0 8 0 3 0 1 4z" fill="#ea4335" /><circle cx="8" cy="8" r="3.500" fill="#4285f4" stroke="#fff" /><circle cx="12" cy="12" r="4.300" fill="#512da8" /><path d="M10.800 13.700L12 10.300l1.200 3.400" stroke="#ddd" strokeWidth=".7" fill="none" /></svg>
        <span className="tracking-[-0.3px]">Primary Care Areas | P...</span>
      </div>
      <div className="ml-px flex w-[119px]">
        <Cell><circle cx="8" cy="8" r="7" fill="#f1edf7" stroke="#653292" strokeWidth="1.500" /><path d="M4.500 6q-.5-2 .3-3L7 4h2.200l2-1q.8 1 .3 3 0 3.500-2.500 3.500V14H7V9.500Q4.500 9.500 4.500 6z" fill="#653292" /></Cell>
        <Cell><circle cx="8" cy="7.500" r="7.500" fill="#16526c" /><path d="M2 5l5-3 4 2-4 2-2 5-3-2z" fill="#62b67e" /><circle cx="8.500" cy="7" r="4.300" fill="#b3d9e9" stroke="#eee" /><path d="M7 5l3-1 2 3-3 2z" fill="#5a9cc4" /><path d="M12 10.500l3.500 4" stroke="#222" strokeWidth="2" /></Cell>
        <Cell><path d="M5 2l8-2 3 1v11l-7 3-4-2z" fill="#b8930f" /><path d="M5 2l5 1v12l-5-2z" fill="#ecd043" /><path d="M1 9l4-3 4 3-1 5-6 1z" fill="#257c99" /><path d="M2 10l3-2 2 3z" fill="#a2d068" /></Cell>
      </div>
      <div className="flex h-full w-[152px] items-center whitespace-nowrap border-b-2 border-[#0a70c4] pl-[4px] pt-[3px] text-[12px] tracking-[-0.35px]">
        <svg className="mb-px mr-[3px] size-4 shrink-0" viewBox="0 0 16 16"><path d="M0 8Q0 0 8 0q7 0 8 6-1 4-5 4-2 0-1-3-6-2-4 8Q0 14 0 8z" fill="#1688d2" /><path d="M1 4Q3 0 8 0q7 0 8 6-1 4-5 4-2 0-1-3-3-4-9-3z" fill="#3fc68d" /><circle cx="10" cy="12" r="4" fill="#e8f1f8" /><circle cx="10" cy="11" r="1.500" fill="#47657d" /><path d="M7 15q3-4 6 0z" fill="#47657d" /></svg>
        New tab and 1 more ...
      </div>
      <div className="flex flex-1 items-center justify-end">
        <svg className="h-[7px] w-[12px]" viewBox="0 0 12 7" fill="none" stroke="#222" strokeWidth="1.200"><path d="M.5 6.500L6 1l5.500 5.500" /></svg>
        <span className="ml-[20px] w-[43px] whitespace-nowrap pt-px text-[12px] tracking-[-0.3px]">6:58 PM</span>
        <svg className="ml-[22px] h-[16px] w-[16px]" viewBox="0 0 16 16"><path d="M0 0h16v13h-5l-3 3-2-3H0z" fill="#000" /><path d="M3 4h10M3 7h10M3 10h6" stroke="#bbb" /></svg>
        <span className="ml-[20px] mr-[5px] h-[31px] w-px bg-[#aaa]" />
      </div>
    </div>
  );
}

export default function App() {
  return (
    <div className={`flex h-[720px] w-[1280px] flex-col overflow-hidden bg-white ${UI}`}>
      <TabStrip />
      <AddressBar />
      <Bookmarks />
      <SiteHeader />
      <div className="flex h-[494px] shrink-0">
        <SidePanel />
        <MapView />
      </div>
      <DownloadBar />
      <Taskbar />
    </div>
  );
}
